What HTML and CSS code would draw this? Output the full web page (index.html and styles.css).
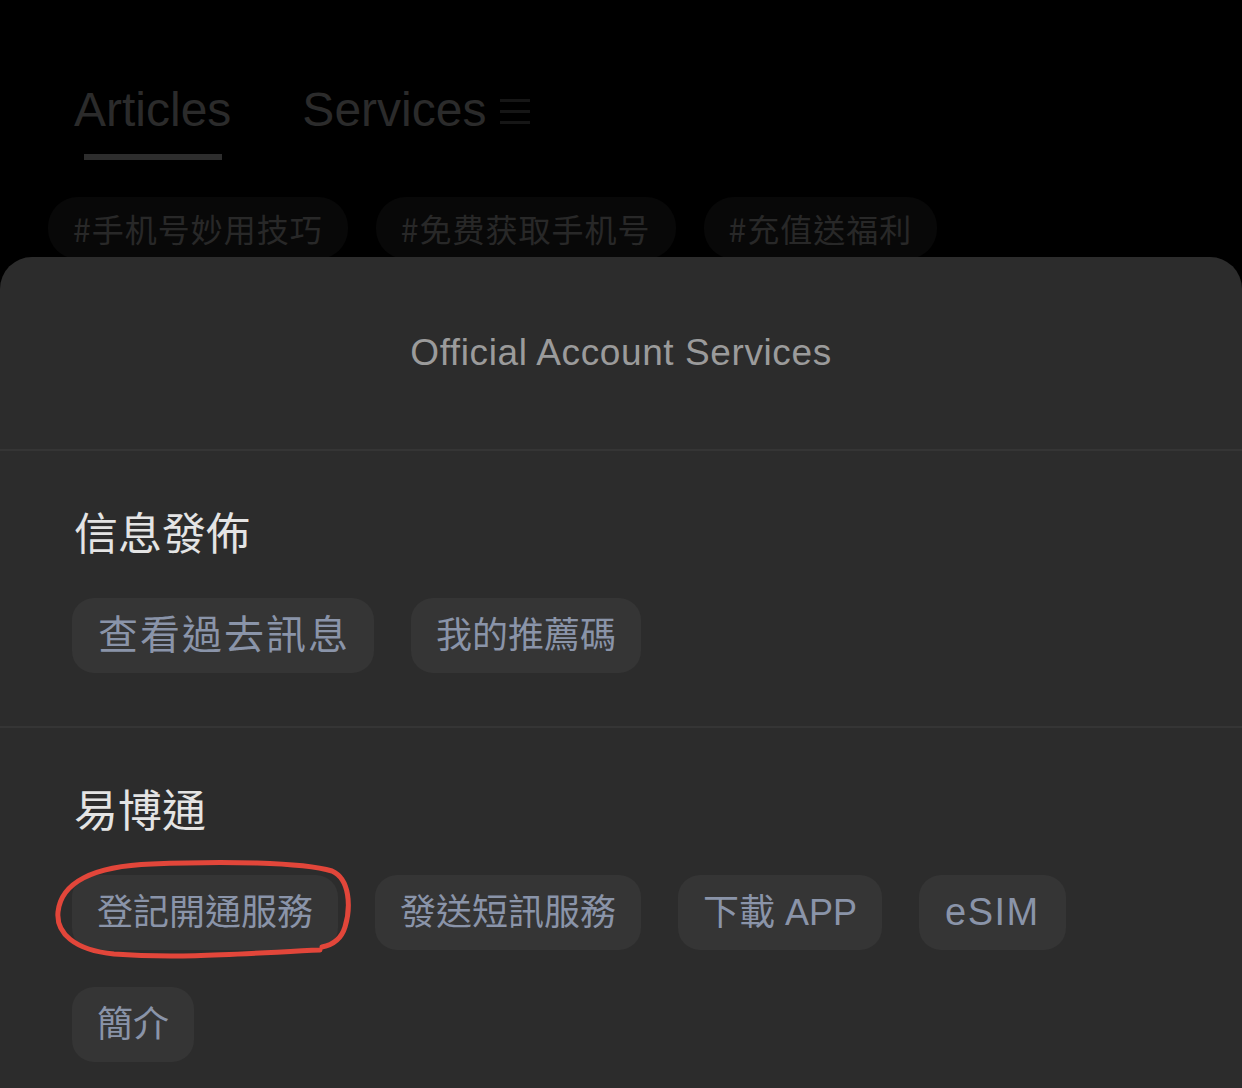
FILE: index.html
```html
<!DOCTYPE html>
<html lang="zh-Hant">
<head>
<meta charset="UTF-8">
<title>Official Account Services</title>
<link rel="stylesheet" href="styles.css">
</head>
<body>

<div class="page">
  <div class="tabs">
    <div class="tab active">Articles</div>
    <div class="tab">Services
      <!-- menu icon -->
      <svg class="menu-icon" width="30" height="26" viewBox="0 0 30 26">
        <rect x="0" y="1" width="30" height="3" fill="#161616"/>
        <rect x="0" y="12" width="30" height="3" fill="#161616"/>
        <rect x="0" y="23" width="30" height="3" fill="#161616"/>
      </svg>
    </div>
  </div>
  <div class="tab-line"></div>

  <div class="tags">
    <span class="tag">#手机号妙用技巧</span>
    <span class="tag">#免费获取手机号</span>
    <span class="tag">#充值送福利</span>
  </div>
</div>

<div class="sheet">
  <div class="sheet-title">Official Account Services</div>

  <div class="section">
    <h2>信息發佈</h2>
    <div class="chips">
      <span class="chip chip-wide">查看過去訊息</span>
      <span class="chip">我的推薦碼</span>
    </div>
  </div>

  <div class="section">
    <h2>易博通</h2>
    <div class="chips">
      <span class="chip marked">登記開通服務
        <!-- hand drawn circle -->
        <svg class="mark" width="310" height="112" viewBox="0 0 310 112">
          <path d="M268 93 C200 96 130 102 62 97 C22 93 4 76 6 55 C9 26 40 9 100 7 C170 4 250 5 280 14 C298 22 299 50 293 70 C289 83 280 88 270 90" fill="none" stroke="#e2463a" stroke-width="5" stroke-linecap="round"/>
        </svg>
      </span>
      <span class="chip">發送短訊服務</span>
      <span class="chip">下載 APP</span>
      <span class="chip chip-latin">eSIM</span>
      <span class="chip">簡介</span>
    </div>
  </div>
</div>

</body>
</html>
```

FILE: styles.css
```css
body { margin: 0; background: #000; font-family: "Liberation Sans", "Noto Sans CJK TC", sans-serif; overflow: hidden; height: 1088px; }
.page { padding: 82px 0 0 74px; }
.tabs { display: flex; gap: 71px; }
.tab { font-size: 48px; line-height: 56px; color: #2b2b2b; display: flex; align-items: center; }
.menu-icon { margin-left: 14px; margin-top: 2px; }
.tab-line { width: 138px; height: 6px; background: #2d2d2d; margin: 16px 0 0 10px; }
.tags { display: flex; gap: 28px; margin: 37px 0 0 -26px; }
.tag { font-family: "Noto Sans CJK SC", sans-serif; font-size: 32px; letter-spacing: 1px; line-height: 62px; color: #282828; background: #080808; padding: 0 25px; border-radius: 30px; }

.sheet { position: fixed; top: 257px; left: 0; right: 0; bottom: 0; background: #2c2c2c; border-radius: 32px 32px 0 0; }
.sheet-title { height: 192px; display: flex; align-items: center; justify-content: center; font-size: 37px; letter-spacing: 0.6px; color: #9b9b9b; border-bottom: 2px solid #353535; }
.section { padding: 58px 72px 53px; border-bottom: 2px solid #353535; }
.section:last-child { border-bottom: none; }
.section h2 { margin: 0 0 45px 2px; font-family: "Noto Sans CJK TC", sans-serif; font-weight: normal; font-size: 44px; line-height: 44px; color: #e4e4e4; }
.chips { display: flex; flex-wrap: wrap; gap: 37px; }
.chip { position: relative; height: 75px; line-height: 75px; padding: 0 25px; font-size: 36px; color: #8a94a9; background: #353535; border-radius: 22px; }
.chip-wide { font-size: 40px; letter-spacing: 2px; padding: 0 24px 0 26px; }
.chip-latin { font-size: 38px; letter-spacing: 1.5px; padding: 0 26px; }
.mark { position: absolute; left: -20px; top: -18px; }
```
